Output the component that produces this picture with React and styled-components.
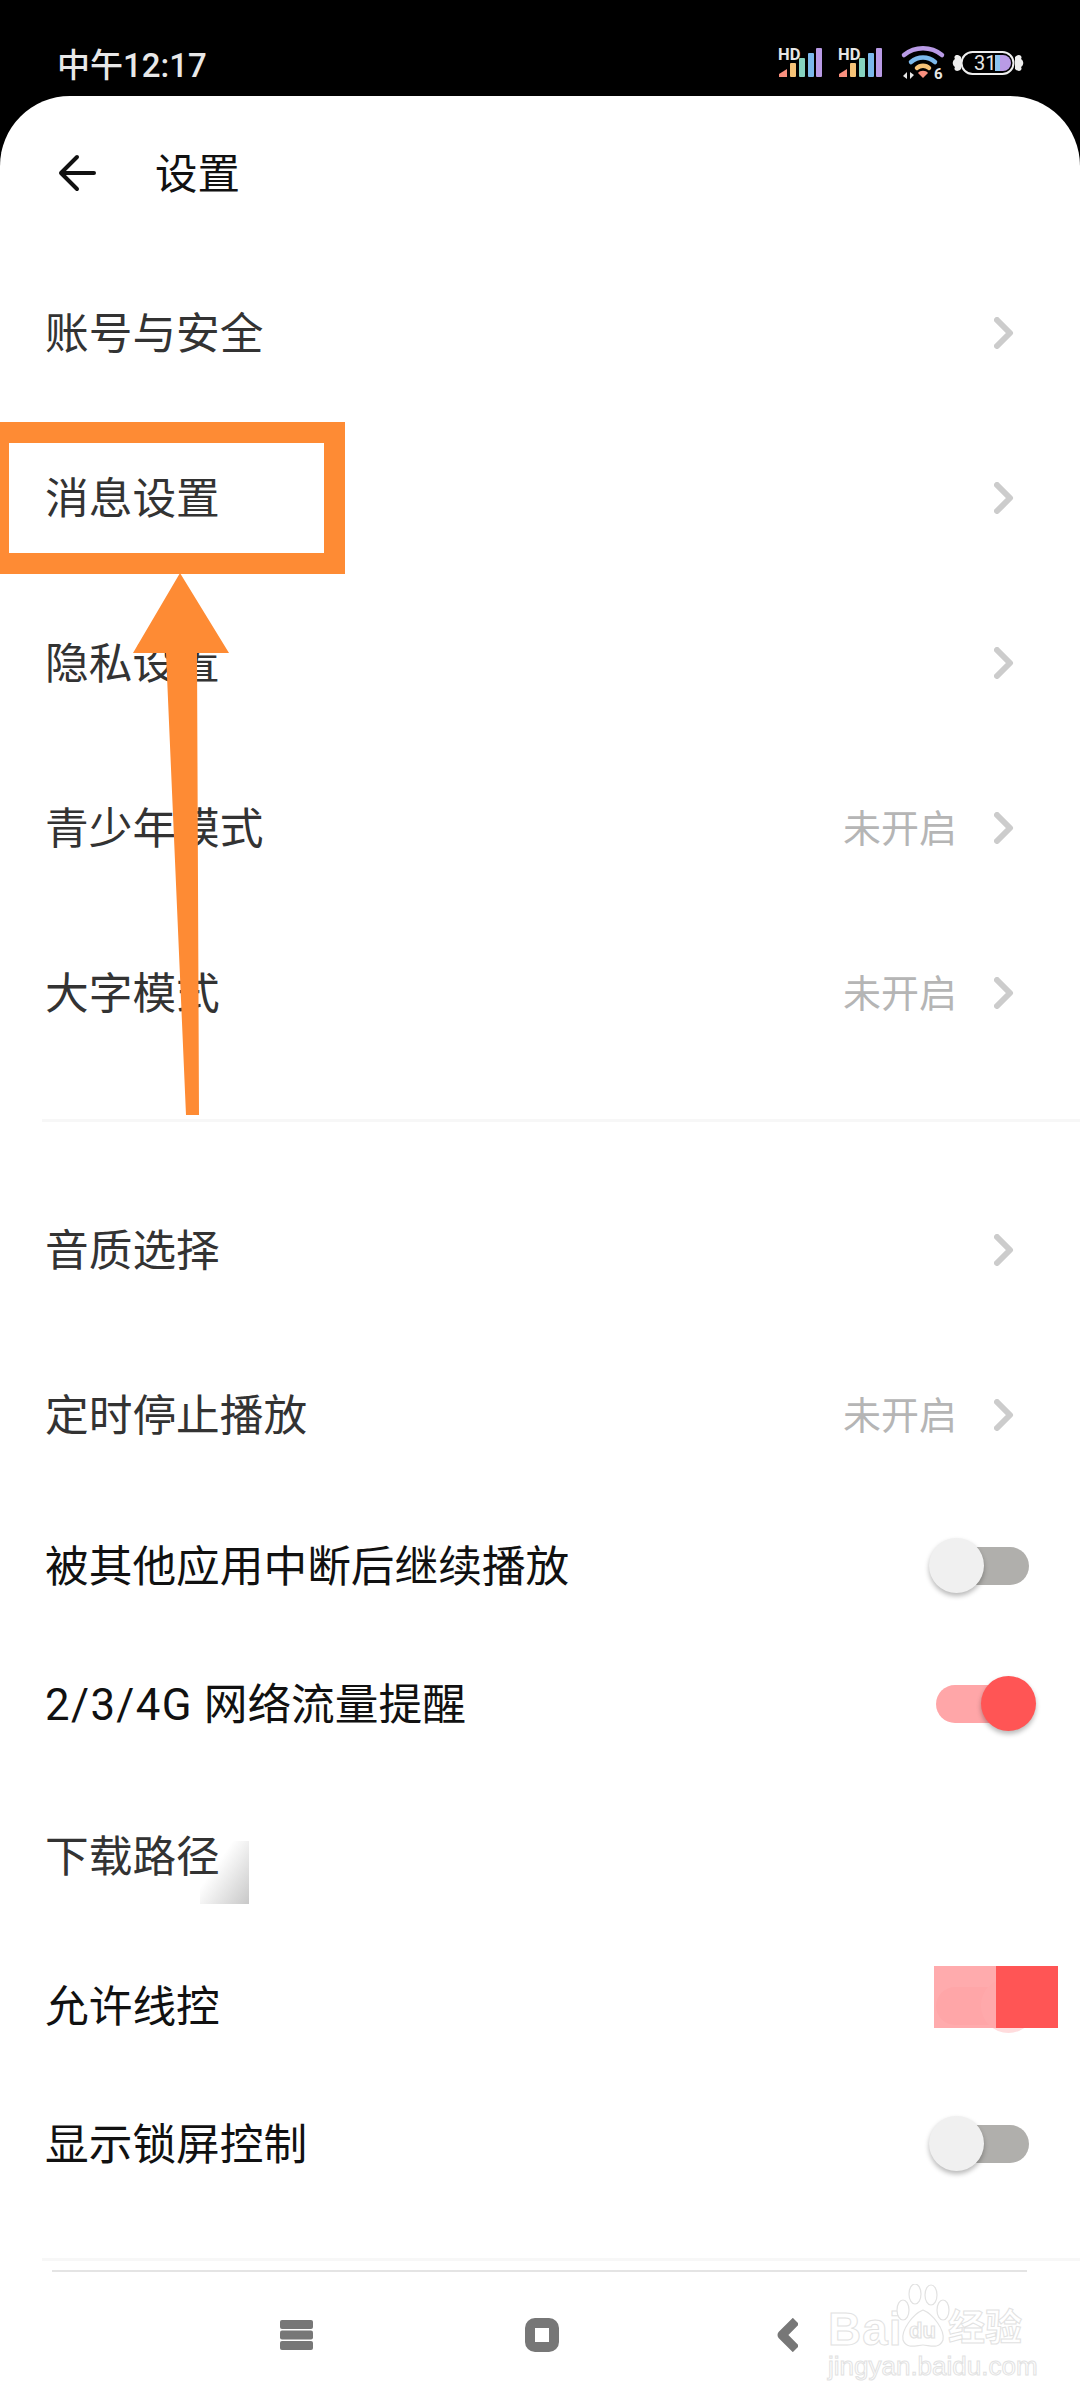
import React from "react";
import styled, { createGlobalStyle } from "styled-components";

const GlobalStyle = createGlobalStyle`
  html, body {
    margin: 0;
    padding: 0;
    background: #000;
  }
  * {
    box-sizing: border-box;
  }
`;

const FONT = `Roboto, "Noto Sans CJK SC", sans-serif`;

const Page = styled.div`
  position: relative;
  width: 1080px;
  height: 2400px;
  overflow: hidden;
  background: #000;
  font-family: ${FONT};
`;

const StatusBar = styled.div`
  display: flex;
  align-items: center;
  justify-content: space-between;
  height: 96px;
  padding: 30px 56px 0 57px;
`;

const Clock = styled.div`
  font-size: 33px;
  font-weight: 500;
  color: #e8e8e8;
`;

const StatusIcons = styled.div`
  display: flex;
  align-items: center;
  gap: 16px;
`;

const SignalSvg = styled.svg`
  overflow: visible;
`;

const WifiSvg = styled.svg`
  margin: 0 -9px 0 3px;
  overflow: visible;
`;

const Sheet = styled.div`
  height: 2304px;
  background: #fff;
  border-radius: 70px 70px 0 0;
  display: flex;
  flex-direction: column;
`;

const Header = styled.div`
  display: flex;
  align-items: center;
  height: 154px;
  padding-left: 58px;
  flex-shrink: 0;
`;

const Title = styled.div`
  margin: 0 0 5px 59px;
  font-size: 42.5px;
  color: #111;
`;

const Group = styled.div`
  display: flex;
  flex-direction: column;
`;

const Row = styled.div`
  display: flex;
  align-items: center;
  justify-content: space-between;
  height: ${(p) => p.$h || 165}px;
  padding: 0 ${(p) => (p.$toggle ? 51 : 66)}px 0 45px;
`;

const Label = styled.div`
  position: relative;
  margin-bottom: 6px;
  font-size: 43.7px;
  color: ${(p) => (p.$dark ? "#111" : "#333")};
`;

const Latin = styled.span`
  letter-spacing: 1.4px;
`;

const Right = styled.div`
  display: flex;
  align-items: center;
  gap: 37px;
`;

const Value = styled.span`
  margin-bottom: 4px;
  font-size: 38px;
  color: #b5b5b5;
`;

const Rule = styled.div`
  height: 3px;
  background: #f7f7f7;
  margin: ${(p) => p.$top}px 0 ${(p) => p.$bottom}px 42px;
  flex-shrink: 0;
`;

const Track = styled.div`
  position: relative;
  width: 93px;
  height: 38px;
  border-radius: 19px;
  background: ${(p) => (p.$on ? "#ffa6a8" : "#b0afac")};
`;

const Knob = styled.div`
  position: absolute;
  top: -9px;
  left: ${(p) => (p.$on ? 45 : -7)}px;
  width: 55px;
  height: 55px;
  border-radius: 50%;
  background: ${(p) => (p.$on ? "#ff5555" : "#f0f0f0")};
  box-shadow: 0 3px 5px rgba(0, 0, 0, 0.28);
  ${(p) => p.$faded && "background: #ffdcdd; box-shadow: none;"}
`;

// 原图里盖住开关的两块色块
const Cover = styled.div`
  position: absolute;
  top: -21px;
  left: -2px;
  display: flex;
  width: 124px;
  height: 62px;
`;

const CoverPart = styled.div`
  flex: 1;
  background: ${(p) => p.$color};
`;

const Smudge = styled.div`
  position: absolute;
  left: 155px;
  top: 20px;
  width: 49px;
  height: 63px;
  background: linear-gradient(125deg, rgba(200, 200, 200, 0) 35%, #c8c8c8 100%);
`;

const NavLine = styled.div`
  height: 2px;
  background: #e4e4e4;
  margin: 9px 53px 0 52px;
  flex-shrink: 0;
`;

const NavBar = styled.div`
  display: grid;
  grid-template-columns: repeat(3, 245px);
  justify-items: center;
  align-items: center;
  padding: 46px 0 0 174px;
`;

const Frame = styled.div`
  position: absolute;
  left: 0;
  top: 422px;
  width: 345px;
  height: 152px;
  border: solid #fe8b34;
  border-width: 21px 21px 21px 9px;
`;

const ArrowMark = styled.svg`
  position: absolute;
  left: 0;
  top: 0;
`;

const Watermark = styled.div`
  position: absolute;
  left: 826px;
  top: 2284px;
  width: 200px;
  height: 96px;
  font-family: "Liberation Sans", "Noto Sans CJK SC", sans-serif;
  color: #fff;
  -webkit-text-stroke: 1px #e2e2e2;
`;

const MarkText = styled.span`
  position: absolute;
  left: ${(p) => p.$x}px;
  top: ${(p) => p.$y}px;
  font-size: ${(p) => p.$size}px;
  font-weight: ${(p) => p.$weight || 700};
  letter-spacing: ${(p) => p.$spacing || 0}px;
  line-height: 1;
  white-space: nowrap;
`;

const Paw = styled.svg`
  position: absolute;
  left: 68px;
  top: 0;
`;

const SignalIcon = () => (
  <SignalSvg width="44" height="32" viewBox="0 0 44 32">
    <text x="0" y="13" fontFamily="Roboto, sans-serif" fontWeight="700" fontSize="16.5" fill="#e6e6e6">
      HD
    </text>
    <path d="M1 30 v-3 l8 -5 v8 z" fill="#f98f7e" />
    <rect x="12" y="16" width="6" height="14" rx="1" fill="#f6c377" />
    <rect x="21" y="11" width="6" height="19" rx="1" fill="#86d3c0" />
    <rect x="30" y="6" width="6" height="24" rx="1" fill="#7cb9ec" />
    <rect x="38" y="1" width="6" height="29" rx="1" fill="#b99be6" />
  </SignalSvg>
);

const WifiIcon = () => (
  <WifiSvg width="44" height="38" viewBox="0 0 44 38">
    <path d="M3 11 C14 2 30 2 41 11" fill="none" stroke="#b99be6" strokeWidth="4.5" strokeLinecap="round" />
    <path d="M10 18 C17 12 27 12 34 18" fill="none" stroke="#7cb9ec" strokeWidth="4.5" strokeLinecap="round" />
    <path d="M16 24 C19 21 25 21 28 24" fill="none" stroke="#f6c377" strokeWidth="4.5" strokeLinecap="round" />
    <path d="M22 34 L17 29 C19 26 25 26 27 29 Z" fill="#f98f7e" />
    <path d="M6 28 v7 l-4 -3 z M9 28 v7 l4 -4 z" fill="#e6e6e6" />
    <text x="33" y="35" fontFamily="Roboto, sans-serif" fontWeight="700" fontSize="15" fill="#e6e6e6">
      6
    </text>
  </WifiSvg>
);

const BatteryIcon = () => (
  <svg width="72" height="28" viewBox="0 0 72 28">
    <path d="M9 8 C5 4 1 7 3 10 C0 12 0 16 3 18 C1 21 5 24 9 20 Z" fill="#eee" />
    <path d="M63 8 C67 4 71 7 69 10 C72 12 72 16 69 18 C71 21 67 24 63 20 Z" fill="#eee" />
    <rect x="9.5" y="3" width="52" height="22" rx="11" fill="#000" stroke="#eee" strokeWidth="2" />
    <path d="M43 6 h5 v16 h-5 z" fill="#8cc4f0" />
    <path d="M48 6 h3 a8 8 0 0 1 0 16 h-3 z" fill="#b99be6" />
    <text x="22" y="21" fontFamily="Roboto, sans-serif" fontSize="20" fill="#e6e6e6">
      31
    </text>
  </svg>
);

const BackIcon = () => (
  <svg width="38" height="38" viewBox="0 0 38 38" fill="none" stroke="#111" strokeWidth="4" strokeLinecap="round" strokeLinejoin="round">
    <path d="M3 19 H36 M19 3 L3 19 L19 35" />
  </svg>
);

const Chevron = () => (
  <svg width="20" height="32" viewBox="0 0 20 32" fill="none" stroke="#cccccc" strokeWidth="6" strokeLinecap="round" strokeLinejoin="round">
    <path d="M3 3 L16 16 L3 29" />
  </svg>
);

const MenuIcon = () => (
  <svg width="33" height="30" viewBox="0 0 33 30" fill="#777">
    <rect x="0" y="0" width="33" height="9" rx="2" />
    <rect x="0" y="10.5" width="33" height="9" rx="2" />
    <rect x="0" y="21" width="33" height="9" rx="2" />
  </svg>
);

const HomeIcon = () => (
  <svg width="34" height="34" viewBox="0 0 34 34">
    <rect x="5" y="5" width="24" height="24" rx="5" fill="none" stroke="#777" strokeWidth="10" />
  </svg>
);

const NavBackIcon = () => (
  <svg width="22" height="34" viewBox="0 0 22 34" fill="none" stroke="#777" strokeWidth="9" strokeLinejoin="round">
    <path d="M20 3 L6 17 L20 31" />
  </svg>
);

const Toggle = ({ on, patched }) => (
  <Track $on={on}>
    <Knob $on={on} $faded={patched} />
    {patched && (
      <Cover>
        <CoverPart $color="rgba(255, 166, 168, 0.94)" />
        <CoverPart $color="#ff5555" />
      </Cover>
    )}
  </Track>
);

const NavRow = ({ label, value, h }) => (
  <Row $h={h}>
    <Label>{label}</Label>
    <Right>
      {value && <Value>{value}</Value>}
      <Chevron />
    </Right>
  </Row>
);

const App = () => {
  return (
    <Page>
      <GlobalStyle />
      <StatusBar>
        <Clock>中午12:17</Clock>
        <StatusIcons>
          <SignalIcon />
          <SignalIcon />
          <WifiIcon />
          <BatteryIcon />
        </StatusIcons>
      </StatusBar>

      <Sheet>
        <Header>
          <BackIcon />
          <Title>设置</Title>
        </Header>

        <Group>
          <NavRow label="账号与安全" />
          <NavRow label="消息设置" />
          <NavRow label="隐私设置" />
          <NavRow label="青少年模式" value="未开启" />
          <NavRow label="大字模式" value="未开启" />
        </Group>

        <Rule $top={44} $bottom={45} />

        <Group>
          <NavRow label="音质选择" />
          <NavRow label="定时停止播放" value="未开启" />
          <Row $h={138} $toggle>
            <Label $dark>被其他应用中断后继续播放</Label>
            <Toggle />
          </Row>
          <Row $h={138} $toggle>
            <Label $dark>
              <Latin>2/3/4G</Latin> 网络流量提醒
            </Label>
            <Toggle on />
          </Row>
          <Row $h={166} $toggle>
            <Label>
              下载路径
              <Smudge />
            </Label>
          </Row>
          <Row $h={134} $toggle>
            <Label $dark>允许线控</Label>
            <Toggle on patched />
          </Row>
          <Row $h={142} $toggle>
            <Label $dark>显示锁屏控制</Label>
            <Toggle />
          </Row>
        </Group>

        <Rule $top={43} $bottom={0} />
        <NavLine />

        <NavBar>
          <MenuIcon />
          <HomeIcon />
          <NavBackIcon />
        </NavBar>
      </Sheet>

      <Frame />
      <ArrowMark width="345" height="1116" viewBox="0 0 345 1116">
        <path d="M180 573 L229 653 L197 653 L199 1115 L186 1115 L166 653 L133 653 Z" fill="#fe8b34" />
      </ArrowMark>

      <Watermark>
        <MarkText $x={2} $y={22} $size={46} $spacing={1}>
          Bai
        </MarkText>
        <MarkText $x={122} $y={26} $size={37}>
          经验
        </MarkText>
        <MarkText $x={2} $y={69} $size={26} $weight={400}>
          jingyan.baidu.com
        </MarkText>
        <Paw width="58" height="66" viewBox="0 0 58 66" fill="#fff" stroke="#e2e2e2" strokeWidth="1.2">
          <ellipse cx="9" cy="26" rx="6" ry="10" />
          <ellipse cx="21" cy="10" rx="6" ry="10" />
          <ellipse cx="37" cy="11" rx="6" ry="10" />
          <ellipse cx="49" cy="26" rx="6" ry="10" />
          <path d="M29 26 C19 30 7 46 9 56 C13 66 23 61 29 61 C35 61 45 66 49 56 C51 46 39 30 29 26 Z" />
          <text x="15" y="54" fontFamily="Liberation Sans, sans-serif" fontWeight="700" fontSize="22">
            du
          </text>
        </Paw>
      </Watermark>
    </Page>
  );
};

export default App;
